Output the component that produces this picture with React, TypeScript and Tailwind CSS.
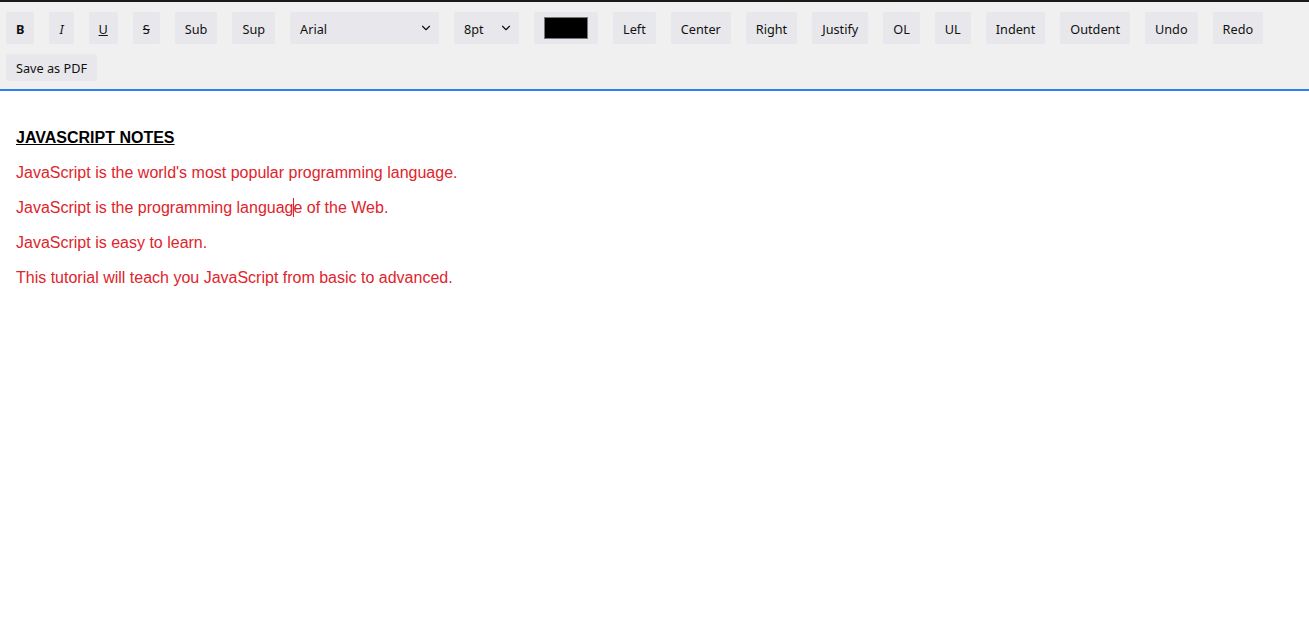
import { ChevronDown } from "lucide-react";

const ui = { fontFamily: '"Noto Sans", sans-serif' };
const doc = { fontFamily: '"Liberation Sans", Arial, sans-serif' };

function Btn({ children }: { children: React.ReactNode }) {
  return (
    <button
      type="button"
      className="px-[10px] pt-[6px] pb-[4px] bg-[#e8e8ec] text-[12.7px] leading-[17px] text-[#111] rounded-[2px]"
      style={ui}
    >
      {children}
    </button>
  );
}

function Select({ value, width }: { value: string; width: string }) {
  return (
    <div
      className={`flex items-center justify-between h-[32px] pl-[10px] pr-[6px] bg-[#e8e8ec] text-[12.7px] text-[#111] rounded-[2px] ${width}`}
      style={ui}
    >
      <span className="pt-[3px]">{value}</span>
      <ChevronDown className="h-[14px] w-[14px]" strokeWidth={2} />
    </div>
  );
}

export default function App() {
  const lines = [
    "JavaScript is the world's most popular programming language.",
    null,
    "JavaScript is easy to learn.",
    "This tutorial will teach you JavaScript from basic to advanced.",
  ];

  return (
    <div className="min-h-screen bg-white">
      <div className="border-t-2 border-[#1a1a1a] border-b-2 border-b-[#2f7ff0] bg-[#f0f0f0] pl-[6px] pr-[6px] pt-[10px] pb-[8px]">
        <div className="flex flex-wrap gap-x-[15px] gap-y-[10px]">
          <Btn>
            <b>B</b>
          </Btn>
          <Btn>
            <i>I</i>
          </Btn>
          <Btn>
            <u>U</u>
          </Btn>
          <Btn>
            <s>S</s>
          </Btn>
          <Btn>Sub</Btn>
          <Btn>Sup</Btn>
          <Select value="Arial" width="w-[149px]" />
          <Select value="8pt" width="w-[65px]" />
          <div className="flex items-center justify-center w-[64px] h-[32px] bg-[#e8e8ec] rounded-[2px]">
            <span className="block w-[44px] h-[22px] bg-black border border-[#777]" />
          </div>
          <Btn>Left</Btn>
          <Btn>Center</Btn>
          <Btn>Right</Btn>
          <Btn>Justify</Btn>
          <Btn>OL</Btn>
          <Btn>UL</Btn>
          <Btn>Indent</Btn>
          <Btn>Outdent</Btn>
          <Btn>Undo</Btn>
          <Btn>Redo</Btn>
          <Btn>Save as PDF</Btn>
        </div>
      </div>

      <div className="px-[16px] pt-[38px] text-[16px] leading-[18px]" style={doc}>
        <p className="mb-[17px] font-bold underline text-black">JAVASCRIPT NOTES</p>
        {lines.map((l, i) =>
          l ? (
            <p key={i} className="mb-[17px] text-[#e0242c]">
              {l}
            </p>
          ) : (
            <p key={i} className="mb-[17px] text-[#e0242c]">
              JavaScript is the programming languag
              <span className="relative">
                <span className="absolute left-0 -top-[1px] w-px h-[19px] bg-[#e0242c]" />
              </span>
              e of the Web.
            </p>
          )
        )}
      </div>
    </div>
  );
}
